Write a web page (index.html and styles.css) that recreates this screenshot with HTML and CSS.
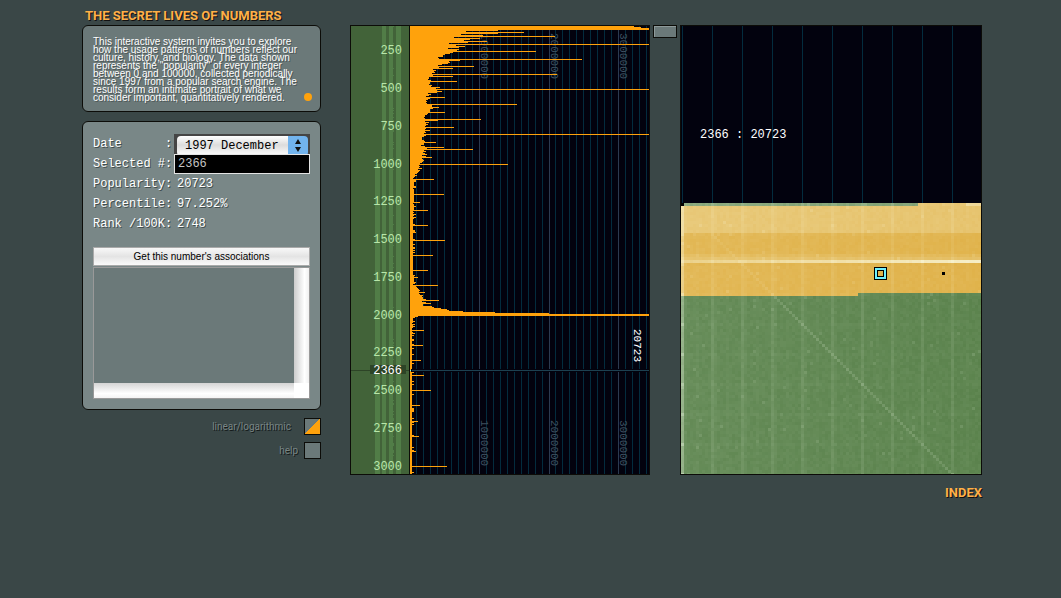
FILE: index.html
```
<!DOCTYPE html>
<html lang="en">
<head>
  <meta charset="UTF-8">
  <title>The Secret Lives of Numbers</title>
  <link rel="stylesheet" href="styles.css">
</head>
<body>
  <h1>THE SECRET LIVES OF NUMBERS</h1>

  <main class="layout">
    <section class="sidebar">
      <div class="panel intro">
        <p>This interactive system invites you to explore<br>
        how the usage patterns of numbers reflect our<br>
        culture, history, and biology. The data shown<br>
        represents the "popularity" of every integer<br>
        between 0 and 100000, collected periodically<br>
        since 1997 from a popular search engine. The<br>
        results form an intimate portrait of what we<br>
        consider important, quantitatively rendered.</p>
        <span class="dot"></span>
      </div>

      <form class="panel info">
        <div class="row">
          <label for="date">Date</label><span class="colon">:</span>
          <div class="select-box">
            <select id="date">
              <option>1997 December</option>
            </select>
            <svg class="arrows" viewBox="0 0 20 20">
              <path d="M10 4l3 5H7zM10 17l3-5H7z" fill="#111"/>
            </svg>
          </div>
        </div>
        <div class="row">
          <label for="selected">Selected #:</label>
          <input id="selected" type="text" value="2366">
        </div>
        <div class="row"><span>Popularity:</span><span class="value">20723</span></div>
        <div class="row"><span>Percentile:</span><span class="value">97.252%</span></div>
        <div class="row"><span>Rank /100K:</span><span class="value">2748</span></div>

        <button type="button" class="assoc">Get this number's associations</button>
        <div class="results">
          <div class="results-body"></div>
          <div class="bar-v"></div>
          <div class="bar-h"></div>
          <div class="corner"></div>
        </div>
      </form>

      <div class="option">
        <label for="scale">linear/logarithmic</label>
        <input id="scale" type="checkbox" checked>
      </div>
      <div class="option help">
        <label for="help">help</label>
        <input id="help" type="checkbox">
      </div>
    </section>

    <svg id="histogram" class="histogram" viewBox="350 25 300 450"></svg>

    <div class="middle">
      <button type="button" class="toggle" aria-label="Toggle"></button>
    </div>

    <section class="overview">
      <div class="readout"><span>2366 : 20723</span></div>
      <canvas id="grid" class="grid" width="300" height="271"></canvas>
    </section>
  </main>

  <footer><a href="#">INDEX</a></footer>

  <script src="script.js"></script>
</body>
</html>
```
FILE: styles.css
```
body {
  margin: 0;
  padding: 7px 79px 0 82px;
  background-color: #3a4747;
  color: white;
  font-family: "Liberation Mono", monospace;
  font-size: 12px;
}

h1 {
  margin: 0 0 0 3px;
  font: bold 13px/18px "Roboto", sans-serif;
  color: #ffb048;
  text-shadow: 1px 1px 0 #111;
}

.layout {
  display: grid;
  grid-template-columns: minmax(0, 268fr) minmax(0, 300fr) 30px minmax(0, 302fr);
  align-items: start;
}

.sidebar {
  padding-right: 29px;
}

.panel {
  border: 1px solid #0c0c08;
  border-radius: 6px;
}

.intro {
  position: relative;
  padding: 12px 10px 9px;
  background-color: #6b7979;
}

.intro p {
  margin: 0;
  font: 10px/8px "Liberation Sans", sans-serif;
  white-space: nowrap;
  text-shadow: 1px 1px 0 #4c5656;
}

.dot {
  position: absolute;
  right: 8px;
  bottom: 10px;
  width: 8px;
  height: 8px;
  border-radius: 50%;
  background-color: #ffa20c;
}

.info {
  margin-top: 9px;
  padding: 12px 10px 10px;
  background-color: #798787;
}

.row {
  display: flex;
  height: 20px;
  line-height: 20px;
  text-shadow: 1px 1px 0 #424e4e;
}

.row label,
.row > span:first-child {
  flex: none;
  width: 81px;
}

.row .colon {
  margin-left: -9px;
  width: 9px;
}

.value {
  padding-left: 3px;
}

.select-box {
  position: relative;
  flex: 1;
  height: 20px;
  padding: 2px 2px 0 3px;
  box-sizing: border-box;
  background-color: #454545;
}

.row select {
  display: block;
  appearance: none;
  width: 100%;
  height: 20px;
  padding: 0 0 0 8px;
  border: 0;
  border-radius: 4px;
  background: linear-gradient(to right, transparent calc(100% - 20px), #72b4ee 0), linear-gradient(#fff, #dcdcdc 45%, #fff);
  color: black;
  font: 12px "Liberation Mono", monospace;
}

.arrows {
  position: absolute;
  top: 1px;
  right: 2px;
  width: 20px;
  height: 20px;
  pointer-events: none;
}

.row input {
  position: relative;
  flex: 1;
  min-width: 0;
  height: 20px;
  box-sizing: border-box;
  padding: 0 0 0 3px;
  border: 1px solid #e4e4e4;
  background-color: black;
  color: #c4c4c4;
  font: 12px "Liberation Mono", monospace;
}

.assoc {
  display: block;
  width: 100%;
  height: 19px;
  margin-top: 13px;
  padding: 0;
  border: 1px solid #aaa;
  background: linear-gradient(#f8f8f8, #e4e4e4 50%, #fafafa);
  color: black;
  font: 10px "Liberation Sans", sans-serif;
}

.results {
  display: grid;
  grid-template-columns: 1fr 15px;
  grid-template-rows: 115px 15px;
  margin-top: 1px;
  border: 1px solid #999;
}

.results-body {
  background-color: #6b7979;
}

.bar-v {
  background: linear-gradient(to right, #ccc, #fff 70%, #f0f0f0);
}

.bar-h {
  background: linear-gradient(#d4d4d4, #fff 70%, #f4f4f4);
}

.corner {
  background-color: white;
}

.option {
  display: flex;
  justify-content: flex-end;
  align-items: center;
  gap: 13px;
  margin-top: 8px;
  color: #788585;
  font: 10px/16px "Roboto", sans-serif;
  text-shadow: 1px 1px 0 #141a1a;
}

.help {
  gap: 6px;
  margin-top: 7px;
}

.option input {
  appearance: none;
  width: 17px;
  height: 17px;
  margin: 0;
  border: 1px solid #0c0c08;
  background-color: #6b7979;
}

.option input:checked {
  background: linear-gradient(135deg, #6b7979 50%, #ffa20c 50%);
}

.histogram {
  display: block;
  width: 100%;
}

.tick {
  fill: #b9e6aa;
  font-size: 12px;
  text-anchor: end;
}

.current {
  fill: white;
}

.scale {
  fill: #3c5060;
  font-size: 11px;
}

.scale.current {
  fill: white;
}

.middle {
  display: flex;
  justify-content: center;
}

.toggle {
  width: 24px;
  height: 13px;
  padding: 0;
  border: 1px solid #0c0c08;
  background-color: #6b7979;
  box-shadow: inset 1px 1px 0 #8d9999;
}

.overview {
  border: 1px solid #0c0c08;
}

.readout {
  height: 177px;
  background: repeating-linear-gradient(to right, #02020e 0 1px, #032c3e 1px 2px, #02020e 2px 30px);
}

.readout span {
  display: block;
  padding: 101px 0 0 19px;
  line-height: 16px;
}

.grid {
  display: block;
  width: 100%;
  image-rendering: pixelated;
}

footer {
  margin-top: 9px;
  text-align: right;
}

footer a {
  color: #ffb048;
  font: bold 13px/18px "Roboto", sans-serif;
  text-decoration: none;
  text-shadow: 1px 1px 0 #111;
}
```
FILE: script.js
```
const svg = document.getElementById('histogram');

function add(tag, attrs, text) {
  const el = document.createElementNS('http://www.w3.org/2000/svg', tag);
  for (const key in attrs) el.setAttribute(key, attrs[key]);
  if (text) el.textContent = text;
  svg.appendChild(el);
}

function rect(x, y, width, height, fill) {
  add('rect', { x, y, width, height, fill, 'shape-rendering': 'crispEdges' });
}

// small repeatable random numbers so that the page always looks the same
let seed = 7;
function random() {
  seed = (seed * 16807) % 2147483647;
  return seed / 2147483647;
}

// frame, axis column and plot background
rect(350, 25, 300, 450, '#0c0c08');
rect(351, 26, 58, 448, '#426339');
rect(410, 26, 239, 448, '#02020e');

for (let y = 26; y < 474; y++) {
  [[375, 5], [382, 4], [389, 4], [396, 5]].forEach(([x, w], i) => {
    if (i === 0 && y < 164) return;
    const cut = i === 2 && random() < 0.15 ? 1 : 0;
    rect(x, y, w + cut, 1, '#517d47');
  });
}

// vertical grid, brighter at each million
for (let i = 1; i <= 34; i++) {
  rect(410 + Math.floor(i * 6.95), 26, 1, 448, i % 10 ? '#032c3e' : '#2c3a50');
}

['1000000', '2000000', '3000000'].forEach((label, i) => {
  const x = [481, 551, 620][i];
  add('text', { class: 'scale', transform: `translate(${x} 33) rotate(90)` }, label);
  add('text', { class: 'scale', transform: `translate(${x} 420) rotate(90)` }, label);
});

// right edge of the usual bars, as [y, width]
const envelope = [
  [30, 89], [31, 61], [33, 79], [34, 51], [35, 67], [37, 41], [38, 66], [40, 47],
  [41, 70], [43, 36], [45, 53], [46, 58], [48, 37], [50, 52], [52, 44], [54, 35],
  [58, 28], [60, 44], [62, 39], [65, 29], [68, 24], [73, 25], [80, 19], [85, 19],
  [89, 25], [95, 18], [102, 15], [107, 22], [115, 14], [123, 18], [130, 15],
  [145, 13], [153, 14], [160, 12], [170, 8], [177, 4], [195, 4], [230, 3],
  [270, 3], [284, 4], [289, 8], [297, 12], [306, 16], [316, 8], [318, 3], [340, 2], [474, 2]
];

const spikes = {
  26: 224, 27: 231, 28: 239, 29: 239, 32: 114, 36: 145, 44: 239, 51: 126, 59: 172,
  66: 64, 68: 43, 74: 147, 76: 43, 81: 47, 87: 30, 89: 239, 91: 32, 97: 35,
  104: 107, 107: 29, 112: 35, 119: 71, 120: 28, 127: 44, 130: 20, 134: 239,
  142: 26, 147: 34, 149: 63, 157: 22, 164: 98, 168: 12, 179: 24, 194: 34,
  202: 10, 210: 18, 217: 6, 225: 18, 232: 6, 240: 35, 255: 23, 270: 18, 277: 8,
  285: 28, 292: 15, 295: 13, 300: 29, 303: 21, 306: 22, 307: 24, 308: 31,
  309: 37, 310: 39, 311: 53, 312: 85, 313: 139, 314: 239, 315: 239, 330: 14,
  345: 13, 360: 11, 375: 14, 390: 21, 405: 10, 421: 8, 436: 9, 451: 6, 466: 37
};

function usual(y) {
  let i = 1;
  while (i < envelope.length - 1 && envelope[i][0] < y) i++;
  const [y0, w0] = envelope[i - 1];
  const [y1, w1] = envelope[i];
  const w = w0 + (w1 - w0) * (y - y0) / (y1 - y0);
  return Math.max(1, Math.round(w * (0.85 + random() * 0.3) + (random() < 0.2 ? 2 : 0)));
}

for (let y = 26; y < 474; y++) {
  rect(410, y, spikes[y] || usual(y), 1, '#ffa20c');
}

// selected number
rect(351, 370, 58, 1, '#2d4427');
rect(370, 365, 36, 9, '#2d4427');
rect(411, 369, 238, 3, '#02020e');
rect(412, 370, 237, 1, '#1d4050');
rect(410, 370, 1, 1, '#6ff');

for (let n = 250; n <= 3000; n += 250) {
  add('text', { class: 'tick', x: 402, y: Math.round(16.5 + n * 0.151) }, String(n));
}
add('text', { class: 'tick current', x: 402, y: 374 }, '2366');
add('text', { class: 'scale current', transform: 'translate(634 329) rotate(90)' }, '20723');

// overview: one 3px cell per number, a hundred numbers per row
const ctx = document.getElementById('grid').getContext('2d');
for (let row = 0; row <= 90; row++) {
  for (let col = 0; col < 100; col++) {
    const n = row * 100 + col;
    const gold = n >= 79 && n < 3059;
    let light = random() * 0.06 + (100 - col) * 0.0007;
    if (col === 0) light += 0.25;
    if (col % 10 === 0) light += 0.07;
    if (col % 10 === 1 && col < 60) light += 0.03;
    if (col % 5 === 0) light += 0.02;
    if (row % 10 === 0) light += 0.02;
    if (row % 10 === 0 && col === 0) light += 0.2;
    if (row === col && row > 9) light += row < 30 ? 0.08 : 0.15;
    if (random() < 0.012) light += 0.1;
    if (row < 10) light += 0.24;
    if (row === 17) light += 0.08;
    if (row === 18) light += 0.18;
    if (row === 19) light += 0.38 + col * 0.005;
    if (row === 20) light -= 0.04;
    if (n >= 95 && n < 100) light += 0.3;
    light = Math.max(0, Math.min(light, 0.95));
    const base = gold ? [224, 178, 74] : [90, 130, 76];
    const white = gold ? [248, 244, 210] : [225, 240, 215];
    const rgb = base.map((c, i) => Math.round(c + (white[i] - c) * light));
    ctx.fillStyle = n === 0 ? '#000' : `rgb(${rgb})`;
    ctx.fillRect(col * 3, row * 3, 3, 3);
  }
}

// cursor on 2366 and the second marker
ctx.fillStyle = '#000';
ctx.fillRect(193, 64, 13, 13);
ctx.fillStyle = '#6ff0ff';
ctx.fillRect(194, 65, 11, 11);
ctx.fillStyle = '#000';
ctx.fillRect(196, 67, 7, 7);
ctx.fillStyle = '#e2b24c';
ctx.fillRect(197, 68, 5, 5);
ctx.fillStyle = '#000';
ctx.fillRect(261, 69, 3, 3);
```
